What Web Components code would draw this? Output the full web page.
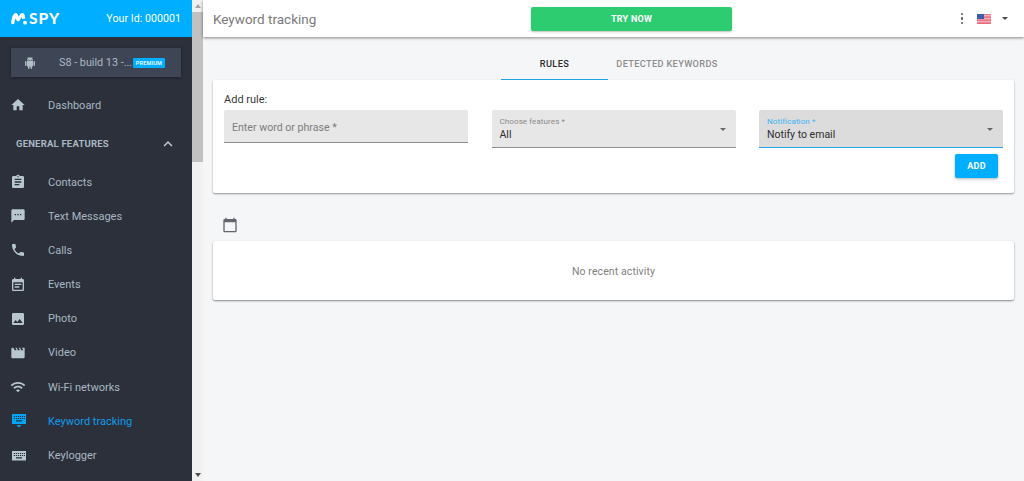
<!DOCTYPE html>
<html>
<head>
<meta charset="utf-8">
<title>Keyword tracking</title>
<style>
  html, body { margin: 0; height: 100%; overflow: hidden; }
  body { font-family: Roboto, "Liberation Sans", sans-serif; background: #f5f6f8; }
</style>
</head>
<body>
<app-shell>
  <side-bar slot="side">
    <nav-item icon="home" style="margin-top:11px">Dashboard</nav-item>
    <nav-group>GENERAL FEATURES</nav-group>
    <nav-item icon="contacts">Contacts</nav-item>
    <nav-item icon="sms">Text Messages</nav-item>
    <nav-item icon="call">Calls</nav-item>
    <nav-item icon="event">Events</nav-item>
    <nav-item icon="photo">Photo</nav-item>
    <nav-item icon="video">Video</nav-item>
    <nav-item icon="wifi">Wi-Fi networks</nav-item>
    <nav-item icon="keyword" active>Keyword tracking</nav-item>
    <nav-item icon="keyboard">Keylogger</nav-item>
  </side-bar>
  <top-bar slot="top">Keyword tracking</top-bar>
  <tab-bar></tab-bar>
  <rule-card></rule-card>
  <activity-list></activity-list>
</app-shell>

<script>
// the two keyboards are drawn on a 16px grid so their keys stay visible at this size
function keysPath(top) {
  let d = '';
  [top + 2, top + 4].forEach((y) => {
    [4, 6, 8, 10, 12, 14].forEach((x) => { d += `M${x - 0.2} ${y - 0.1}h1.2v1.2h-1.2z`; });
  });
  return `${d}M6 ${top + 6.2}h6v1.2H6z`;
}

const icons = {
  home: 'M10 20v-6h4v6h5v-8h3L12 3 2 12h3v8z',
  contacts: 'M19 3h-4.18C14.4 1.84 13.3 1 12 1s-2.4.84-2.82 2H5c-1.1 0-2 .9-2 2v14c0 1.1.9 2 2 2h14c1.1 0 2-.9 2-2V5c0-1.1-.9-2-2-2zm-7 0c.55 0 1 .45 1 1s-.45 1-1 1-1-.45-1-1 .45-1 1-1zm2 14H7v-2h7v2zm3-4H7v-2h10v2zm0-4H7V7h10v2z',
  sms: 'M20 2H4c-1.1 0-1.99.9-1.99 2L2 22l4-4h14c1.1 0 2-.9 2-2V4c0-1.1-.9-2-2-2zM9 11H7V9h2v2zm4 0h-2V9h2v2zm4 0h-2V9h2v2z',
  call: 'M6.62 10.79c1.44 2.83 3.76 5.14 6.59 6.59l2.2-2.2c.27-.27.67-.36 1.02-.24 1.12.37 2.33.57 3.57.57.55 0 1 .45 1 1V20c0 .55-.45 1-1 1-9.39 0-17-7.61-17-17 0-.55.45-1 1-1h3.5c.55 0 1 .45 1 1 0 1.25.2 2.45.57 3.57.11.35.03.74-.25 1.02l-2.2 2.2z',
  event: 'M17 10H7v2h10v-2zm2-7h-1V1h-2v2H8V1H6v2H5c-1.11 0-1.99.9-1.99 2L3 19c0 1.1.89 2 2 2h14c1.1 0 2-.9 2-2V5c0-1.1-.9-2-2-2zm0 16H5V8h14v11zm-5-5H7v2h7v-2z',
  photo: 'M21 19V5c0-1.1-.9-2-2-2H5c-1.1 0-2 .9-2 2v14c0 1.1.9 2 2 2h14c1.1 0 2-.9 2-2zM8.5 13.5l2.5 3.01L14.5 12l4.5 6H5l3.5-4.5z',
  video: 'M18 4l2 4h-3l-2-4h-2l2 4h-3l-2-4H8l2 4H7L5 4H4c-1.1 0-1.99.9-1.99 2L2 18c0 1.1.9 2 2 2h16c1.1 0 2-.9 2-2V4h-4z',
  wifi: 'M1 9l2 2c4.97-4.97 13.03-4.97 18 0l2-2C16.93 2.93 7.08 2.93 1 9zm8 8l3 3 3-3c-1.65-1.66-4.34-1.66-6 0zm-4-4l2 2c2.76-2.76 7.24-2.76 10 0l2-2C15.14 9.14 8.87 9.14 5 13z',
  android: 'M6 18c0 .55.45 1 1 1h1v3.5c0 .83.67 1.5 1.5 1.5s1.5-.67 1.5-1.5V19h2v3.5c0 .83.67 1.5 1.5 1.5s1.5-.67 1.5-1.5V19h1c.55 0 1-.45 1-1V8H6v10zM3.5 8C2.67 8 2 8.67 2 9.5v7c0 .83.67 1.5 1.5 1.5S5 17.33 5 16.5v-7C5 8.67 4.33 8 3.5 8zm17 0c-.83 0-1.5.67-1.5 1.5v7c0 .83.67 1.5 1.5 1.5s1.5-.67 1.5-1.5v-7c0-.83-.67-1.5-1.5-1.5zm-4.97-5.84l1.3-1.3c.2-.2.2-.51 0-.71-.2-.2-.51-.2-.71 0l-1.48 1.48C13.85 1.23 12.95 1 12 1c-.96 0-1.86.23-2.66.63L7.85.15c-.2-.2-.51-.2-.71 0-.2.2-.2.51 0 .71l1.31 1.31C6.97 3.26 6 5.01 6 7h12c0-1.99-.97-3.75-2.47-4.84zM10 5H9V4h1v1zm5 0h-1V4h1v1z',
  calendar: 'M20 3h-1V1h-2v2H7V1H5v2H4c-1.1 0-2 .9-2 2v16c0 1.1.9 2 2 2h16c1.1 0 2-.9 2-2V5c0-1.1-.9-2-2-2zm0 18H4V8h16v13z'
};
const gridIcons = {
  keyword: `M2 1h14v10H2z${keysPath(1)}M6.5 12h5L9 14.5z`,
  keyboard: `M2 4h14v9.500H2z${keysPath(4)}`
};

const shellTpl = document.createElement('template');
shellTpl.innerHTML = `
<style>
  :host { display: grid; grid-template-columns: 192px 11px 1fr; height: 481px; overflow: hidden; }
  .bar { background: #f1f1f1; display: flex; flex-direction: column; align-items: stretch; }
  .arrow { height: 12px; display: flex; align-items: center; justify-content: center; }
  .arrow i { width: 0; height: 0; border-left: 3.5px solid transparent; border-right: 3.5px solid transparent; }
  .up i { border-bottom: 4px solid #a3a3a3; }
  .down i { border-top: 4px solid #505050; }
  .thumb { height: 150px; background: #c1c1c1; }
  .gap { flex: 1; }
  main { min-width: 0; display: flex; flex-direction: column; }
  .body { padding: 0 10px 0 10px; display: flex; flex-direction: column; }
</style>
<slot name="side"></slot>
<div class="bar">
  <div class="arrow up"><i></i></div>
  <div class="thumb"></div>
  <div class="gap"></div>
  <div class="arrow down"><i></i></div>
</div>
<main>
  <slot name="top"></slot>
  <div class="body"><slot></slot></div>
</main>`;
class AppShell extends HTMLElement {
  constructor() {
    super();
    this.attachShadow({ mode: 'open' }).appendChild(shellTpl.content.cloneNode(true));
  }
}
customElements.define('app-shell', AppShell);

const sideTpl = document.createElement('template');
sideTpl.innerHTML = `
<style>
  :host { display: flex; flex-direction: column; background: #2b303b; height: 481px; overflow: hidden; }
  header { height: 37px; flex: none; background: #00aeff; color: #fff; display: flex; align-items: center; justify-content: space-between; padding: 0 11px 0 11px; }
  .logo { display: flex; align-items: center; gap: 2px; }
  .logo svg { width: 16px; height: 13px; display: block; }
  .logo b { font: 900 15.5px/1 Lato, "Liberation Sans", sans-serif; letter-spacing: 1px; }
  .id { font-size: 10.6px; letter-spacing: .05px; }
  .device { margin: 11px 11px 0; height: 29px; background: #3e4656; box-shadow: 0 1px 3px rgba(0,0,0,.35); display: flex; align-items: center; color: #aeb9c4; font-size: 10.8px; flex: none; }
  .device svg { width: 12px; height: 12px; fill: #b0bec5; margin-left: 13px; margin-right: 23px; flex: none; }
  .device span { width: 74px; white-space: nowrap; }
  .device em { font: 500 5.5px/10px Roboto, sans-serif; background: #00aeff; color: #fff; width: 32px; height: 10px; text-align: center; border-radius: 1px; letter-spacing: .2px; }
</style>
<header>
  <div class="logo">
    <svg viewBox="0 0 16 13"><path fill="#fff" d="M.2 10.800C.6 6.500 1.600 2.500 3.800 1.300 6 .3 7 2.500 7.700 4.800 8.800 2.300 10.200.5 12 1c1.600.6 2 3 2.300 5.500l-3.300.5c-.2-1-.4-1.800-.7-1.700-.8 1.300-1.500 4.200-3.300 4.200C5.500 9.500 4.900 7.500 4.500 6.300 4 7.500 3.700 9.500 3.500 11c-.4 1.700-3.400 1.500-3.300-.2z"/><circle cx="14" cy="10.700" r="1.900" fill="#fff"/></svg>
    <b>SPY</b>
  </div>
  <div class="id">Your Id: 000001</div>
</header>
<div class="device"><svg viewBox="0 0 24 24"><path d="${icons.android}"/></svg><span>S8 - build 13 -...</span><em>PREMIUM</em></div>
<slot></slot>`;
class SideBar extends HTMLElement {
  constructor() {
    super();
    this.attachShadow({ mode: 'open' }).appendChild(sideTpl.content.cloneNode(true));
  }
}
customElements.define('side-bar', SideBar);

class NavItem extends HTMLElement {
  constructor() {
    super();
    const active = this.hasAttribute('active');
    const name = this.getAttribute('icon');
    const svg = gridIcons[name]
      ? `<svg viewBox="0 0 16 16"><path fill-rule="evenodd" d="${gridIcons[name]}"/></svg>`
      : `<svg viewBox="0 0 24 24"><path d="${icons[name]}"/></svg>`;
    this.attachShadow({ mode: 'open' }).innerHTML = `
<style>
  :host { display: flex; align-items: center; height: 34.15px; flex: none; color: ${active ? '#0f9bea' : '#a9b7c2'}; font-size: 11px; }
  svg { width: 16px; height: 16px; margin-left: 10px; margin-right: 22px; fill: ${active ? '#00a5f5' : '#b7c6cf'}; flex: none; }
</style>
${svg}<slot></slot>`;
  }
}
customElements.define('nav-item', NavItem);

class NavGroup extends HTMLElement {
  constructor() {
    super();
    this.attachShadow({ mode: 'open' }).innerHTML = `
<style>
  :host { display: flex; align-items: center; justify-content: space-between; height: 43px; box-sizing: border-box; padding: 0 15px 0 16px; color: #a9b7c2; font-size: 9.5px; font-weight: 700; letter-spacing: .2px; flex: none; }
  svg { width: 18px; height: 18px; fill: #c4ced6; }
</style>
<slot></slot>
<svg viewBox="0 0 24 24"><path d="M7.41 15.41L12 10.83l4.59 4.58L18 14l-6-6-6 6z"/></svg>`;
  }
}
customElements.define('nav-group', NavGroup);

class TopBar extends HTMLElement {
  constructor() {
    super();
    this.attachShadow({ mode: 'open' }).innerHTML = `
<style>
  :host { display: grid; grid-template-columns: 318px 201px 1fr; align-items: center; height: 37px; flex: none; background: #fff; box-shadow: 0 1px 3px rgba(0,0,0,.45); padding: 0 16px 0 10px; position: relative; }
  .title { font-size: 13.5px; color: #7a7a7a; }
  .try { height: 24px; background: #2ecc71; color: #fff; font-size: 9px; font-weight: 700; letter-spacing: .25px; display: flex; align-items: center; justify-content: center; border-radius: 2px; box-shadow: 0 1px 2px rgba(0,0,0,.25); }
  .right { display: flex; align-items: center; justify-content: flex-end; }
  .dots { display: flex; flex-direction: column; gap: 2px; margin-right: 14px; }
  .dots i { width: 2.2px; height: 2.2px; border-radius: 50%; background: #555; }
  .flag { width: 14px; height: 10px; margin-right: 11px; display: block; }
  .caret { width: 0; height: 0; border-left: 3px solid transparent; border-right: 3px solid transparent; border-top: 3px solid #444; }
</style>
<div class="title"><slot></slot></div>
<div class="try">TRY NOW</div>
<div class="right">
  <div class="dots"><i></i><i></i><i></i></div>
  <svg class="flag" viewBox="0 0 14 10">
    <rect width="14" height="10" fill="#f4f4f4"/>
    <path d="M0 .7h14M0 2.2h14M0 3.7h14M0 5.2h14M0 6.7h14M0 8.2h14M0 9.6h14" stroke="#ea4a62" stroke-width=".9"/>
    <rect width="7" height="5" fill="#3d5db5"/>
  </svg>
  <div class="caret"></div>
</div>`;
  }
}
customElements.define('top-bar', TopBar);

class TabBar extends HTMLElement {
  constructor() {
    super();
    this.attachShadow({ mode: 'open' }).innerHTML = `
<style>
  :host { display: flex; justify-content: center; height: 43px; flex: none; font-size: 9.2px; font-weight: 500; letter-spacing: .35px; color: #8d8d8d; }
  div { width: 107px; display: flex; align-items: center; justify-content: center; box-sizing: border-box; padding-top: 11px; border-bottom: 1px solid transparent; }
  .on { color: #2c2c2c; border-bottom-color: #22a7e8; }
  .off { width: 118px; }
</style>
<div class="on">RULES</div><div class="off">DETECTED KEYWORDS</div>`;
  }
}
customElements.define('tab-bar', TabBar);

class FieldBox extends HTMLElement {
  constructor() {
    super();
    const label = this.getAttribute('label');
    const value = this.getAttribute('value');
    const focus = this.hasAttribute('focus');
    this.attachShadow({ mode: 'open' }).innerHTML = `
<style>
  :host { display: block; height: ${value ? 37 : 32}px; background: ${focus ? '#dcdcdc' : '#e7e7e7'}; border-bottom: 1px solid ${focus ? '#22a7e8' : '#8f8f8f'}; border-radius: 2px 2px 0 0; position: relative; }
  .ph { font-size: 10.6px; color: #7d7d7d; padding: 11px 8px 0; }
  .lab { font-size: 8px; color: ${focus ? '#3db3f5' : '#8a8a8a'}; padding: 6px 8px 0; letter-spacing: .1px; line-height: 11px; }
  .val { font-size: 10.5px; color: #2e2e2e; padding: 1px 8px 0; line-height: 14px; }
  i { position: absolute; right: 10px; top: 18px; width: 0; height: 0; border-left: 3px solid transparent; border-right: 3px solid transparent; border-top: 3px solid #666; }
</style>
${value ? `<div class="lab">${label}</div><div class="val">${value}</div><i></i>` : `<div class="ph">${label}</div>`}`;
  }
}
customElements.define('field-box', FieldBox);

class RuleCard extends HTMLElement {
  constructor() {
    super();
    this.attachShadow({ mode: 'open' }).innerHTML = `
<style>
  :host { display: block; height: 113px; flex: none; background: #fff; border-radius: 2px; box-shadow: 0 1px 2px rgba(0,0,0,.4); padding: 12px 11px 0; box-sizing: border-box; position: relative; }
  .t { font-size: 11px; color: #3a3a3a; line-height: 14px; height: 18px; padding-top: 1px; box-sizing: border-box; }
  .row { display: grid; grid-template-columns: repeat(3, 244px); column-gap: 23.5px; margin-right: -11px; align-items: start; }
  .btn { position: absolute; right: 16px; top: 74px; width: 43px; height: 24px; background: #00aeff; color: #fff; font-size: 9px; font-weight: 700; letter-spacing: .3px; display: flex; align-items: center; justify-content: center; border-radius: 2px; box-shadow: 0 1px 3px rgba(0,0,0,.3); }
</style>
<div class="t">Add rule:</div>
<div class="row">
  <field-box label="Enter word or phrase *"></field-box>
  <field-box label="Choose features *" value="All"></field-box>
  <field-box label="Notification *" value="Notify to email" focus></field-box>
</div>
<div class="btn">ADD</div>`;
  }
}
customElements.define('rule-card', RuleCard);

class ActivityList extends HTMLElement {
  constructor() {
    super();
    this.attachShadow({ mode: 'open' }).innerHTML = `
<style>
  :host { display: block; flex: none; }
  .cal { height: 48px; display: flex; align-items: flex-end; padding-left: 9px; box-sizing: border-box; padding-bottom: 8px; }
  svg { width: 16px; height: 16px; fill: #63676d; display: block; }
  .card { height: 59px; box-sizing: border-box; padding-top: 2px; background: #fff; border-radius: 2px; box-shadow: 0 1px 2px rgba(0,0,0,.45); display: flex; align-items: center; justify-content: center; color: #7f7f7f; font-size: 10.5px; letter-spacing: .1px; }
</style>
<div class="cal"><svg viewBox="0 0 24 24"><path d="${icons.calendar}"/></svg></div>
<div class="card">No recent activity</div>`;
  }
}
customElements.define('activity-list', ActivityList);
</script>
</body>
</html>
